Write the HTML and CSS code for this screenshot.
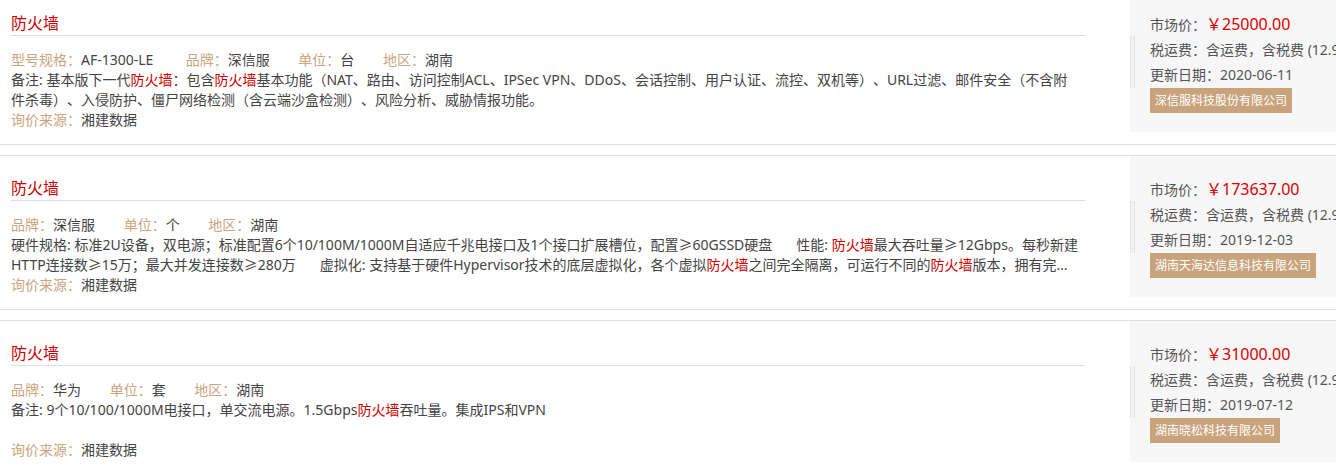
FILE: index.html
```html
<!DOCTYPE html>
<html>
    <head>
        <meta charset="utf-8">
        <title>询价结果</title>
        <link rel="stylesheet" href="styles.css">
    </head>
    <body>
        <div class="list">
            <div class="item">
                <div class="item-main">
                    <h3 class="item-title">防火墙</h3>
                    <div class="item-info">
                        <span><em>型号规格：</em>AF-1300-LE&nbsp;</span>
                        <span><em>品牌：</em>深信服</span>
                        <span><em>单位：</em>台</span>
                        <span><em>地区：</em>湖南</span>
                    </div>
                    <div class="item-remark">备注: 基本版下一代<i>防火墙</i>：包含<i>防火墙</i>基本功能（NAT、路由、访问控制ACL、IPSec VPN、DDoS、会话控制、用户认证、流控、双机等）、URL过滤、邮件安全（不含附件杀毒）、入侵防护、僵尸网络检测（含云端沙盒检测）、风险分析、威胁情报功能。</div>
                    <div class="item-src"><em>询价来源：</em>湘建数据</div>
                </div>
                <div class="item-side">
                    <p>市场价：<span class="price">￥25000.00</span></p>
                    <p>税运费：含运费，含税费 (12.9%)</p>
                    <p>更新日期：2020-06-11</p>
                    <span class="company">深信服科技股份有限公司</span>
                </div>
            </div>
            <div class="item">
                <div class="item-main">
                    <h3 class="item-title">防火墙</h3>
                    <div class="item-info">
                        <span><em>品牌：</em>深信服</span>
                        <span><em>单位：</em>个</span>
                        <span><em>地区：</em>湖南</span>
                    </div>
                    <div class="item-remark">硬件规格: 标准2U设备，双电源；标准配置6个10/100M/1000M自适应千兆电接口及1个接口扩展槽位，配置≥60GSSD硬盘<span class="gap"></span>性能: <i>防火墙</i>最大吞吐量≥12Gbps。每秒新建HTTP连接数≥15万；最大并发连接数≥280万<span class="gap"></span>虚拟化: 支持基于硬件Hypervisor技术的底层虚拟化，各个虚拟<i>防火墙</i>之间完全隔离，可运行不同的<i>防火墙</i>版本，拥有完全独立的管理平面、控制平面和数据平面。</div>
                    <div class="item-src"><em>询价来源：</em>湘建数据</div>
                </div>
                <div class="item-side">
                    <p>市场价：<span class="price">￥173637.00</span></p>
                    <p>税运费：含运费，含税费 (12.9%)</p>
                    <p>更新日期：2019-12-03</p>
                    <span class="company">湖南天海达信息科技有限公司</span>
                </div>
            </div>
            <div class="item">
                <div class="item-main">
                    <h3 class="item-title">防火墙</h3>
                    <div class="item-info">
                        <span><em>品牌：</em>华为</span>
                        <span><em>单位：</em>套</span>
                        <span><em>地区：</em>湖南</span>
                    </div>
                    <div class="item-remark">备注: 9个10/100/1000M电接口，单交流电源。1.5Gbps<i>防火墙</i>吞吐量。集成IPS和VPN</div>
                    <div class="item-src"><em>询价来源：</em>湘建数据</div>
                </div>
                <div class="item-side">
                    <p>市场价：<span class="price">￥31000.00</span></p>
                    <p>税运费：含运费，含税费 (12.9%)</p>
                    <p>更新日期：2019-07-12</p>
                    <span class="company">湖南晓松科技有限公司</span>
                </div>
            </div>
        </div>
    </body>
</html>
```

FILE: styles.css
```css
*{
    margin: 0;
    padding: 0;
    box-sizing: border-box;
}
body{
    font-family: "Noto Sans", "Noto Sans CJK SC", sans-serif;
    font-size: 14px;
    color: #444;
    background-color: #fff;
    overflow: hidden;
    text-spacing-trim: space-all;
}
.list{
    width: 1370px;
    margin-top: -10px;
}
.item{
    display: flex;
    align-items: flex-start;
    border-top: 1px solid #ddd;
    border-bottom: 1px solid #ddd;
    margin-bottom: 10px;
}
.item-main{
    width: 1074px;
    margin: 0 45px 0 11px;
    padding: 15px 0 14px;
    line-height: 20px;
}
.item-title{
    font-size: 16px;
    font-weight: normal;
    color: #c00;
    padding-top: 6px;
    line-height: 23px;
    border-bottom: 1px solid #ddd;
    margin-bottom: 14px;
}
.item-info span{
    margin-right: 25px;
}
.item-info em,
.item-src em{
    font-style: normal;
    color: #c9a580;
}
.item-remark{
    width: 1069px;
    height: 40px;
    overflow: hidden;
    display: -webkit-box;
    -webkit-line-clamp: 2;
    -webkit-box-orient: vertical;
}
.item-remark i{
    font-style: normal;
    color: #c00;
}
.item-remark .gap{
    display: inline-block;
    width: 24px;
}
.item-side{
    position: relative;
    flex-shrink: 0;
    width: 240px;
    height: 141px;
    padding: 21px 0 0 20px;
    background-color: #f7f7f7;
    color: #555;
    white-space: nowrap;
}
.item-side::before{
    content: "";
    position: absolute;
    left: 0;
    top: 45px;
    width: 3px;
    height: 52px;
    background-color: #f2f2f2;
    border-left: 1px solid #e2e2e2;
    border-right: 1px solid #e2e2e2;
}
.item-side p{
    line-height: 25px;
}
.item-side .price{
    color: #d00;
    font-size: 16px;
}
.company{
    display: inline-block;
    margin-top: 1px;
    height: 25px;
    line-height: 25px;
    padding: 0 5px;
    background-color: #c9a37c;
    color: #fff;
    font-size: 12px;
}
```
